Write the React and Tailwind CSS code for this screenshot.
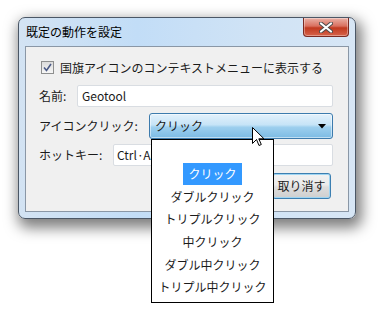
import React from 'react'

const font = { fontFamily: '"Noto Sans CJK JP", "Noto Sans", sans-serif' }

const items = ['クリック', 'ダブルクリック', 'トリプルクリック', '中クリック', 'ダブル中クリック', 'トリプル中クリック']

function CloseButton() {
  return (
    <div className="flex h-[19px] w-[46px] items-center justify-center rounded-b-[4px] border border-t-0 border-[#7a2a22] bg-[linear-gradient(#eab1a6,#d9705f_45%,#c1391f_55%,#d6634a)] shadow-[inset_0_0_0_1px_rgba(255,255,255,0.35)]">
      <svg width="14" height="11" viewBox="0 0 14 11">
        <path d="M2 1.5 L12 9.5 M12 1.5 L2 9.5" stroke="#4a4a4a" strokeWidth="4" strokeLinecap="round" />
        <path d="M2 1.5 L12 9.5 M12 1.5 L2 9.5" stroke="#ffffff" strokeWidth="2.2" strokeLinecap="round" />
      </svg>
    </div>
  )
}

function Checkbox() {
  return (
    <div className="flex h-[13px] w-[13px] items-center justify-center border border-[#8e8f8f] bg-[linear-gradient(#dcdcdc,#f6f6f6)]">
      <svg width="9" height="9" viewBox="0 0 9 9">
        <path d="M1 4.5 L3.5 7.5 L8 1" fill="none" stroke="#4b5a86" strokeWidth="1.6" />
      </svg>
    </div>
  )
}

function Cursor() {
  return (
    <svg width="13" height="21" viewBox="0 0 13 21" className="absolute left-[252px] top-[127px]">
      <path
        d="M0.5 0.5 L0.5 16.5 L4.5 12.5 L7 18.5 L9.3 17.5 L6.8 11.8 L12 11.8 Z"
        fill="#ffffff"
        stroke="#000000"
        strokeWidth="1"
        strokeLinejoin="round"
      />
    </svg>
  )
}

export default function App() {
  return (
    <div className="relative h-[311px] w-[378px] overflow-hidden bg-white pl-[18px] pt-[17px] text-[12px] text-[#1b1b1b]" style={font}>
      <div className="flex h-[202px] w-[338px] flex-col rounded-[7px] border border-[#4b5766] bg-[linear-gradient(90deg,#d3e3f3,#c2ddf7_35%,#d0e3f5_70%,#d7e6f5)] shadow-[3px_6px_14px_3px_rgba(0,0,0,0.5)]">
        <div className="flex h-[28px] items-start justify-between pl-[7px] pr-[6px]">
          <span className="mt-[5px] leading-[18px] text-black">既定の動作を設定</span>
          <CloseButton />
        </div>
        <div className="mx-[6px] flex h-[166px] flex-col border border-[#8a97a6] bg-[#f0f0f0] pl-[13px] pr-[15px]">
          <div className="mt-[14px] flex h-[13px] items-center">
            <div className="ml-[2px]">
              <Checkbox />
            </div>
            <span className="ml-[6px] leading-[13px]">国旗アイコンのコンテキストメニューに表示する</span>
          </div>
          <div className="mt-[11px] flex h-[22px] items-center">
            <span className="w-[38px]">名前:</span>
            <div className="flex h-full flex-1 items-center rounded-[2px] border border-[#d9dde2] bg-white pl-[4px]">Geotool</div>
          </div>
          <div className="mt-[6px] flex h-[26px] items-center">
            <span className="w-[110px]">アイコンクリック:</span>
            <div className="flex h-full flex-1 items-center justify-between rounded-[3px] border border-[#3d7bad] bg-[linear-gradient(#e3f1fb,#c6e4f7_45%,#9dcfee_55%,#7cbbe4)] pl-[5px] pr-[6px] shadow-[inset_0_0_0_1px_rgba(255,255,255,0.5)]">
              <span>クリック</span>
              <svg width="8" height="5" viewBox="0 0 8 5">
                <path d="M0 0 H8 L4 4.5 Z" fill="#000" />
              </svg>
            </div>
          </div>
          <div className="mt-[5px] flex h-[22px] items-center">
            <span className="w-[74px]">ホットキー:</span>
            <div className="flex h-full flex-1 items-center overflow-hidden rounded-[2px] border border-[#d9dde2] bg-white pl-[3px]">Ctrl·Alt</div>
          </div>
          <div className="mt-[7px] flex h-[26px] justify-end gap-[9px] pr-[2px]">
            {/* OK button sits under the open list */}
            <div className="w-[59px] rounded-[3px] border border-[#707070] bg-[linear-gradient(#f2f2f2,#ebebeb_45%,#dddddd_55%,#cfcfcf)]" />
            <div className="flex w-[59px] items-center justify-center rounded-[3px] border border-[#3c7fb1] bg-[linear-gradient(#f2f2f2,#ebebeb_45%,#dddddd_55%,#cfcfcf)] shadow-[inset_0_0_0_1px_#9fd5f2]">取り消す</div>
          </div>
        </div>
      </div>

      <div className="absolute left-[151px] top-[139px] flex h-[164px] w-[123px] flex-col items-center border border-black bg-white pt-[23px]">
        {items.map((t, i) => (
          <div key={t} className="flex h-[22.6px] items-center">
            <span className={i === 0 ? 'bg-[#3399ff] px-[5px] leading-[22px] text-white' : 'leading-[22px]'}>{t}</span>
          </div>
        ))}
      </div>

      <Cursor />
    </div>
  )
}
